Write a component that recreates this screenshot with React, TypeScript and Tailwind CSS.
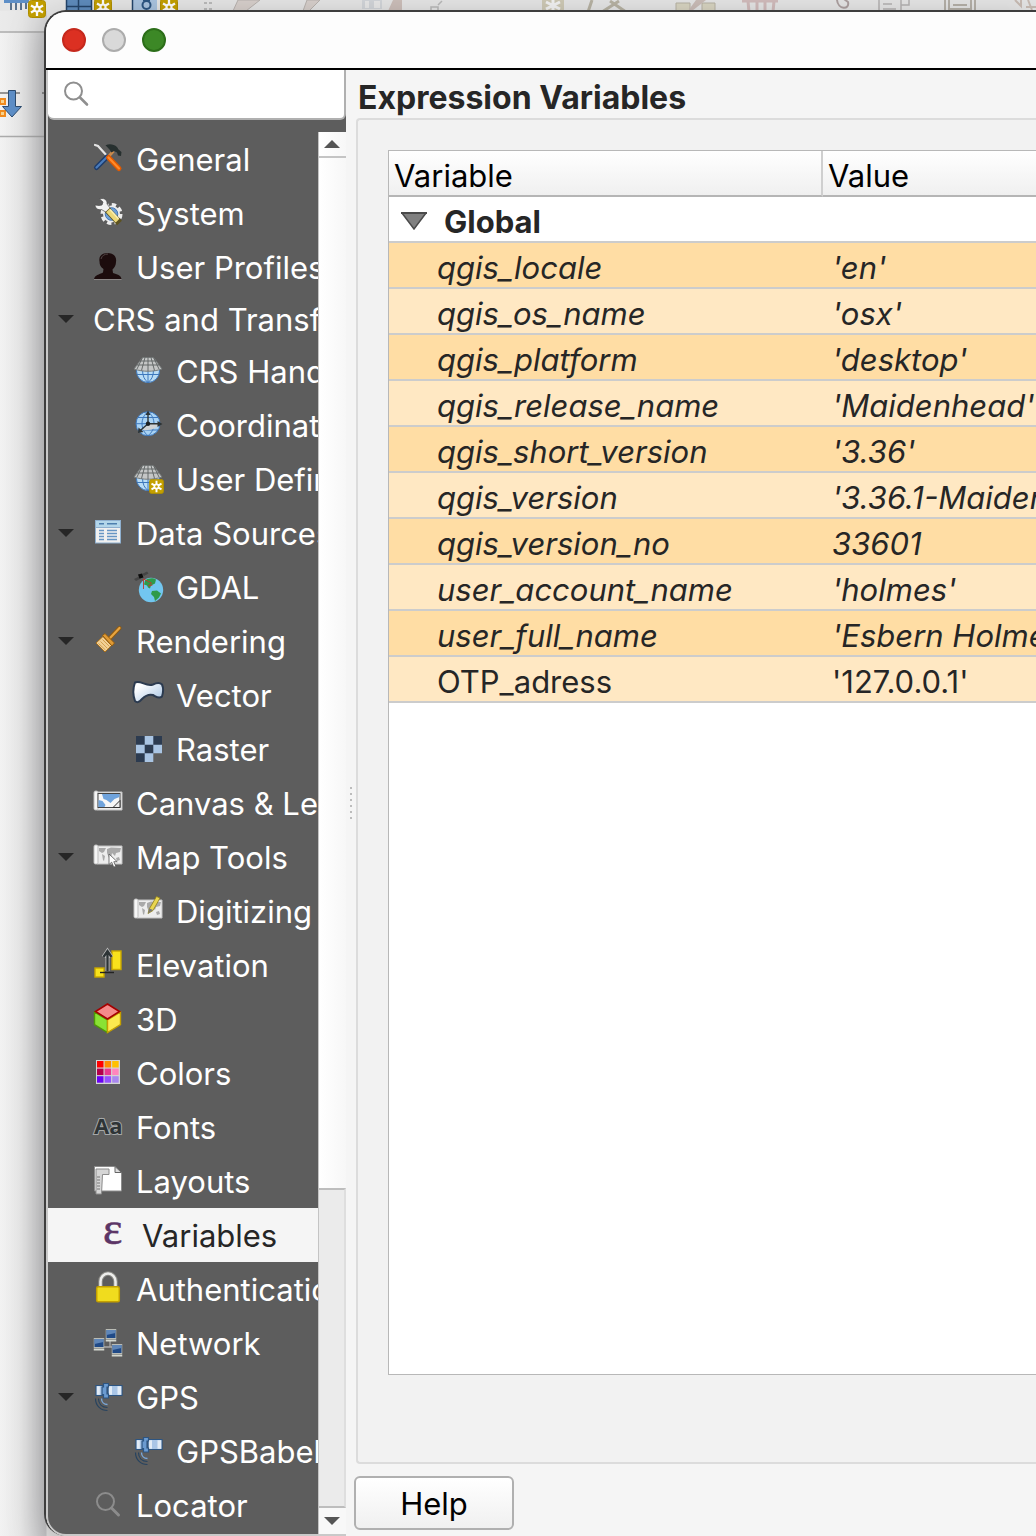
import React from "react";

type IconProps = { children: React.ReactNode };

function Icon({ children }: IconProps) {
  return (
    <svg viewBox="0 0 30 30" className="mb-[2px] size-[30px] shrink-0 overflow-visible" aria-hidden="true">
      {children}
    </svg>
  );
}

const GeneralIcon = () => (
  <Icon>
    <path d="M2 2l3 1 10 11" stroke="#e4e4e4" strokeWidth="2.2" fill="none" strokeLinecap="round" />
    <path d="M15.5 13.5l5-5.5" stroke="#c98a4b" strokeWidth="3" />
    <path d="M12.500 2.200c4-1.500 8.500-1 11.500 1.800l1.500 2.500 3 2.500-.5 4-3-.5-1-3-3-1.500-2.500 1.500-2-3z" fill="#27302f" />
    <path d="M14 14l-10.500 10.500" stroke="#1d3c6b" strokeWidth="5" strokeLinecap="round" />
    <path d="M14 14l-10.500 10.500" stroke="#4a7dbd" strokeWidth="2.200" strokeLinecap="round" />
    <path d="M15.500 14.500l10.500 11" stroke="#e05a00" strokeWidth="5" strokeLinecap="round" />
    <path d="M15.500 14.500l10.500 11" stroke="#ff8a2a" strokeWidth="2.200" strokeLinecap="round" />
  </Icon>
);

const SystemIcon = () => (
  <Icon>
    <circle cx="18.500" cy="17" r="9" fill="none" stroke="#ececec" strokeWidth="4" strokeDasharray="4.200 2.870" />
    <circle cx="18.500" cy="17" r="8.500" fill="#ececec" />
    <circle cx="18.500" cy="17" r="6.300" fill="#6d9fd8" stroke="#4878b0" />
    <path d="M2 8c0 3 3 5.500 6.500 4.500l5 3 4-4-3.500-4.500c.5-3-1.500-5.500-5-5.500l-2.500.5 3.500 3-1 3-3 .5z" fill="#f2f2f2" stroke="#4a4a4a" strokeWidth=".7" />
    <path d="M14.500 13l12 13" stroke="#5c5220" strokeWidth="6.500" />
    <path d="M15 13.500l9.500 10.200" stroke="#ecd878" strokeWidth="5" />
    <path d="M17 12.500l8.500 9.200" stroke="#fbf0b4" strokeWidth="1.500" />
  </Icon>
);

const UserIcon = () => (
  <Icon>
    <path d="M1 28c1-4 5-4.500 9-6.500l.5-3.500c-3-2-4-4-4-7.500C5.500 5 9 2 14.500 2S24 5 23 11c0 3.500-1.500 5.500-3.500 7.500l.5 3.500c4 1.500 8 2 8.500 6z" fill="#1c0c0d" />
    <path d="M8 8c1-3.500 3.500-5 7-5" stroke="#534646" fill="none" />
    <path d="M1 28.500h27.500" stroke="#8a8585" />
  </Icon>
);

const GlobeCone = () => (
  <>
    <circle cx="15" cy="16" r="11.500" fill="#b9dcf5" stroke="#3d78bd" />
    <path d="M4 19.500h22M15 15v12.500M9.500 15c0 6 2 10 5.500 12.500M20.500 15c0 6-2 10-5.500 12.500" stroke="#3d78bd" fill="none" />
    <path d="M9.500 2.500h11L29 14c-9 3-19 3-28 0z" fill="#c4c6c6" stroke="#777b7b" />
    <path d="M7 6h16M4 10h22M12 2.500L8.500 15.500M15 2.500V16M18 2.500l3.500 13M9.500 2.500L4 14M20.500 2.500L26 14" stroke="#5b6060" strokeWidth=".9" fill="none" />
  </>
);

const CrsIcon = () => (
  <Icon>
    <GlobeCone />
  </Icon>
);

const Badge = ({ x, y, size }: { x: number; y: number; size: number }) => (
  <svg x={x} y={y} width={size} height={size} viewBox="0 0 18 18">
    <rect x=".5" y=".5" width="17" height="17" rx="3" fill="#c4a000" stroke="#b08f00" />
    <path d="M9 2v14M3 5.500l12 7M3 12.500l12-7" stroke="#fff" strokeWidth="2.300" />
    <circle cx="9" cy="9" r="3.500" fill="#fff" />
    <circle cx="9" cy="9" r="1.500" fill="#c4a000" />
  </svg>
);

const UserCrsIcon = () => (
  <Icon>
    <GlobeCone />
    <Badge x={16} y={16} size={15} />
  </Icon>
);

const CoordIcon = () => (
  <Icon>
    <circle cx="15" cy="14.700" r="12" fill="#a9d3f4" stroke="#3d78bd" />
    <path d="M3 14.700h24M5 8.500h20M5 21h20M15 2.700c-8 6-8 18 0 24M15 2.700c8 6 8 18 0 24" stroke="#3d78bd" fill="none" />
    <path d="M15 15h11c-1 4-9 7-17 6z" fill="#cfd3d5" />
    <path d="M15 14.700V4M15 14.700h11M15 14.700l-8 7" stroke="#2e3436" strokeWidth="1.400" />
    <path d="M12.500 6L15 1.500 17.500 6zM24.500 12l5 3-5 3zM5.500 18.500L5 24l5.500-1z" fill="#2e3436" />
    <circle cx="15" cy="14.700" r="2.200" fill="#1d2123" />
  </Icon>
);

const DataIcon = () => (
  <Icon>
    <rect x="2.500" y="3.500" width="25" height="22.500" fill="#f0f0f0" stroke="#8fb0cf" />
    <rect x="3" y="4" width="24" height="6" fill="#b3d6ea" />
    <path d="M6 6.700h5M14 6.700h10" stroke="#4d7fae" strokeWidth="1.400" />
    <path d="M3 10.500h24" stroke="#8fb0cf" />
    <path d="M6 13.500h5M14 13.500h10M6 16.500h5M14 16.500h10M6 19.500h5M14 19.500h10M6 22.500h5M14 22.500h10" stroke="#6695c4" strokeWidth="1.300" />
  </Icon>
);

const GdalIcon = () => (
  <Icon>
    <circle cx="18" cy="19" r="12.200" fill="#72c6f0" />
    <path d="M12 9.500c3-2.500 8-3 11-1l-1 4-4 2-1 3-2-1-1-2-3-1z" fill="#2f9a4a" />
    <path d="M19 20l5-.500 4 3-2 4-4 3.500-1-4-3-3z" fill="#2f9a4a" />
    <path d="M10.500 18V8l8 4-3 3 4-1" stroke="#c0392b" strokeWidth=".9" fill="none" />
    <path d="M1 8l5-2.500 2 2L3 10zM9 3l5-2.500 1.500 2L11 5z" fill="#454545" />
    <path d="M5 3.500l4-1 1.500 4-4 1z" fill="#0c0c0c" />
  </Icon>
);

const BroomIcon = () => (
  <Icon>
    <path d="M17 13l9.500-10" stroke="#8f5a10" strokeWidth="4" strokeLinecap="round" />
    <path d="M17 13l9.500-10" stroke="#e8a540" strokeWidth="2.200" strokeLinecap="round" />
    <path d="M3 18l7-6.500 8.500 9L12 27z" fill="#f2d096" stroke="#a8701c" />
    <path d="M5.500 18.500l7 6.500M7.500 16.500l7 7M9.500 14.500l7 7" stroke="#cf9b48" strokeWidth=".9" />
    <path d="M9.500 10.500l2.500-2 9.500 9.500-2.500 3z" fill="#e09a34" stroke="#8f5a10" />
  </Icon>
);

const VectorIcon = () => (
  <Icon>
    <defs>
      <linearGradient id="vec" x1="0" y1="0" x2="1" y2="1">
        <stop offset=".2" stopColor="#fff" />
        <stop offset="1" stopColor="#a3c1e2" />
      </linearGradient>
    </defs>
    <path d="M2 3.500C8 1 13 8 20 5.500c3-1.500 7-2 9 0 1.300 3 1.300 8 0 12-3 3-6 0-9-1.500-5-1.500-8 1-11 4-3 3.500-5 4-7 2C-.2 16 0 9 2 3.500z" fill="url(#vec)" stroke="#2c3b50" strokeWidth="2" />
  </Icon>
);

const RasterIcon = () => (
  <Icon>
    <path d="M3 3h26v17.300h-8.700V29H3z" fill="#aac5e3" />
    <path d="M3 3h8.700v8.700H3zM20.300 3H29v8.700h-8.700zM11.700 11.700h8.600v8.600h-8.600zM3 20.300h8.700V29H3z" fill="#2c3b50" />
  </Icon>
);

const Scroll = () => (
  <>
    <path d="M4 5h25v18H4z" fill="#ededed" stroke="#c2c2c2" />
    <rect x="1" y="4" width="4" height="19" rx="1.500" fill="#f6f6f6" stroke="#bdbdbd" />
  </>
);

const CanvasIcon = () => (
  <Icon>
    <Scroll />
    <rect x="5" y="6.500" width="22" height="14" fill="#f6f6f6" stroke="#444" />
    <path d="M9 7h17.500v3l-5 2-4 4-4-3-3-1zM5.500 13l4 1 3 4-1 2H5.500z" fill="#6fa3dc" />
    <path d="M20 20.500l7-7v7z" fill="#ededed" stroke="#333" />
  </Icon>
);

const WorldMap = () => (
  <>
    <Scroll />
    <path d="M6 7h7l-2 4-2 1-3-2zM9 13l3 2-1 5-1-1zM14 8l4-1.500 10 .5-1 4-4 1-1 3-3-3-1 5-2 0-2-5zM23 17l3-1 1 3-3 1z" fill="#a9a9a9" />
  </>
);

const MapToolsIcon = () => (
  <Icon>
    <WorldMap />
    <path d="M16 13v10.500l2.700-2.300 2 5 2.100-1-2-4.500h3.400z" fill="#fff" stroke="#555" strokeWidth=".8" />
  </Icon>
);

const DigitizingIcon = () => (
  <Icon>
    <WorldMap />
    <path d="M15 18.500l1.500-5 7-12 3.500 1.500-7 12.500z" fill="#e9d650" stroke="#8f7d16" strokeWidth=".8" />
    <path d="M15 18.500l1.500-5 3.500 1.500z" fill="#777" />
  </Icon>
);

const ElevationIcon = () => (
  <Icon>
    <rect x="19" y="2" width="9" height="18.500" fill="#f8e21c" stroke="#c9a800" strokeWidth="1.400" />
    <rect x="2" y="19" width="9" height="9" fill="#f8e21c" stroke="#c9a800" strokeWidth="1.400" />
    <path d="M14.500 22V3M10.500 8l4-6 4 6" stroke="#bbb" strokeWidth="4" fill="none" />
    <path d="M14.500 22V3M10.500 8l4-6 4 6" stroke="#2d3436" strokeWidth="2.300" fill="none" />
    <path d="M7 23.500h14" stroke="#222" strokeWidth="1.400" />
  </Icon>
);

const CubeIcon = () => (
  <Icon>
    <path d="M1.500 9l13 8v12.500l-13-8z" fill="#8ae234" stroke="#4e9a06" strokeWidth="1.400" />
    <path d="M27.500 9l-13 8v12.500l13-8z" fill="#fce94f" stroke="#c4a000" strokeWidth="1.400" />
    <path d="M14.500 1l12 7.500-12 7.500-12-7.500z" fill="#f58a8a" stroke="#a40000" strokeWidth="1.600" />
  </Icon>
);

const swatches = ["#ff0000", "#ff8c00", "#ffc000", "#b3004c", "#e8388f", "#ff85bd", "#6a00f4", "#9650ff", "#a987f0"];

const ColorsIcon = () => (
  <Icon>
    <rect x="3" y="3" width="24" height="24" fill="#d5d5d5" />
    {swatches.map((c, i) => (
      <rect key={c} x={4 + (i % 3) * 7.600} y={4 + Math.floor(i / 3) * 7.600} width="6.500" height="6.500" fill={c} />
    ))}
  </Icon>
);

const FontsIcon = () => (
  <Icon>
    <text x="1" y="23" fontFamily="Open Sans, sans-serif" fontWeight="700" fontSize="22" fill="#2e3436" stroke="#a5a8a8" strokeWidth="2" paintOrder="stroke">Aa</text>
  </Icon>
);

const LayoutsIcon = () => (
  <Icon>
    <path d="M1.500 1.500H22l6.500 6V26h-27z" fill="#fff" stroke="#8c8c8c" />
    <path d="M22 1.500v6h6.500z" fill="#ddd" stroke="#666" />
    <path d="M3 4h13v5.500H9.500L8.500 29H3z" fill="#d6d6d6" stroke="#8c8c8c" />
    <path d="M4 12h3M4 15h3M4 18h3M4 21h3M4 24h3" stroke="#777" />
  </Icon>
);

const VariablesIcon = () => (
  <Icon>
    <text x="4" y="25" fontFamily="Liberation Serif, serif" fontSize="46" fill="#5c3566" stroke="#5c3566" strokeWidth=".6">ε</text>
  </Icon>
);

const LockIcon = () => (
  <Icon>
    <path d="M7.500 14V8.500a7.500 8 0 0115 0V14" stroke="#8b8b86" strokeWidth="4.500" fill="none" />
    <path d="M7.500 14V8.500a7.500 8 0 0115 0V14" stroke="#eeeeec" strokeWidth="2.500" fill="none" />
    <rect x="3.700" y="13.700" width="22.600" height="15" rx="1.500" fill="#f0dc1e" stroke="#c4a000" strokeWidth="1.500" />
  </Icon>
);

const Monitor = ({ x, y }: { x: number; y: number }) => (
  <svg x={x} y={y} width="11" height="13" viewBox="0 0 11 13">
    <rect x=".5" y=".5" width="10" height="9" fill="#204a87" stroke="#b9bcb6" />
    <path d="M1 1h9v3L1 6z" fill="#5f86b8" />
    <path d="M0 10.500h11v2H0z" fill="#d3d7cf" />
  </svg>
);

const NetworkIcon = () => (
  <Icon>
    <path d="M17 13v7M10 20h10" stroke="#aaa" strokeWidth="1.300" />
    <Monitor x={12.500} y={2} />
    <Monitor x={0.500} y={11} />
    <Monitor x={18.500} y={17} />
  </Icon>
);

const GpsIcon = () => (
  <Icon>
    <path d="M3 4.500h7v10H3zM15 4.500h14v10H15z" fill="#a9c5e6" stroke="#2d5582" strokeWidth="1.200" />
    <path d="M3.800 5.300h3v8.400h-3zM24.500 5.300h3.800v8.400h-3.800zM16 5.300h3v8.400h-3z" fill="#e2ebf5" />
    <path d="M10.500 2.500h5V6h-1.500v7h1.500v4h-5v-3.500H9V6h1.500z" fill="#6b9bd1" stroke="#2d5582" strokeWidth="1.200" />
    <path d="M8.500 17.500c0 3.500 2.500 6 6 6" stroke="#7aa7d9" strokeWidth="1.400" fill="none" />
    <path d="M5.500 17.500c0 5.500 3.500 9 9 9" stroke="#27435f" strokeWidth="1.200" fill="none" />
    <path d="M2.500 17.500c0 7 5 12 12 12" stroke="#27435f" strokeWidth="1.200" fill="none" />
  </Icon>
);

const LocatorIcon = () => (
  <Icon>
    <circle cx="12.500" cy="12.500" r="8.500" stroke="#8c8c8c" strokeWidth="2" fill="none" />
    <path d="M18.500 19l7 7" stroke="#8c8c8c" strokeWidth="3" strokeLinecap="round" />
  </Icon>
);

type Item = { label: string; icon?: React.ReactNode; child?: boolean; open?: boolean; selected?: boolean };

const items: Item[] = [
  { label: "General", icon: <GeneralIcon /> },
  { label: "System", icon: <SystemIcon /> },
  { label: "User Profiles", icon: <UserIcon /> },
  { label: "CRS and Transforms", open: true },
  { label: "CRS Handling", icon: <CrsIcon />, child: true },
  { label: "Coordinate Transforms", icon: <CoordIcon />, child: true },
  { label: "User Defined CRS", icon: <UserCrsIcon />, child: true },
  { label: "Data Sources", icon: <DataIcon />, open: true },
  { label: "GDAL", icon: <GdalIcon />, child: true },
  { label: "Rendering", icon: <BroomIcon />, open: true },
  { label: "Vector", icon: <VectorIcon />, child: true },
  { label: "Raster", icon: <RasterIcon />, child: true },
  { label: "Canvas & Legend", icon: <CanvasIcon /> },
  { label: "Map Tools", icon: <MapToolsIcon />, open: true },
  { label: "Digitizing", icon: <DigitizingIcon />, child: true },
  { label: "Elevation", icon: <ElevationIcon /> },
  { label: "3D", icon: <CubeIcon /> },
  { label: "Colors", icon: <ColorsIcon /> },
  { label: "Fonts", icon: <FontsIcon /> },
  { label: "Layouts", icon: <LayoutsIcon /> },
  { label: "Variables", icon: <VariablesIcon />, selected: true },
  { label: "Authentication", icon: <LockIcon /> },
  { label: "Network", icon: <NetworkIcon /> },
  { label: "GPS", icon: <GpsIcon />, open: true },
  { label: "GPSBabel", icon: <GpsIcon />, child: true },
  { label: "Locator", icon: <LocatorIcon /> },
];

function SidebarItem({ label, icon, child, open, selected }: Item) {
  const indent = child ? "w-[85px]" : selected ? "w-[51px]" : "w-[45px]";
  return (
    <li>
      <button
        type="button"
        aria-current={selected ? "page" : undefined}
        className={`flex w-full items-center overflow-hidden text-left whitespace-nowrap ${icon ? "h-[54px]" : "h-[50px]"} ${selected ? "bg-[#f5f5f5] text-[#262626]" : "text-white"}`}
      >
        <span className={`shrink-0 pl-[10px] ${indent}`}>
          {open && (
            <svg viewBox="0 0 16 8" className="h-2 w-4" aria-hidden="true">
              <path d="M0 0h16L8 8z" fill="#262626" />
            </svg>
          )}
        </span>
        {icon}
        <span className={icon ? "ml-[13px] pt-[2px]" : "pt-[2px]"}>{label}</span>
      </button>
    </li>
  );
}

const variables: [string, string][] = [
  ["qgis_locale", "'en'"],
  ["qgis_os_name", "'osx'"],
  ["qgis_platform", "'desktop'"],
  ["qgis_release_name", "'Maidenhead'"],
  ["qgis_short_version", "'3.36'"],
  ["qgis_version", "'3.36.1-Maidenhead'"],
  ["qgis_version_no", "33601"],
  ["user_account_name", "'holmes'"],
  ["user_full_name", "'Esbern Holmes'"],
  ["OTP_adress", "'127.0.0.1'"],
];

function Backdrop() {
  return (
    <div className="absolute inset-0 bg-[linear-gradient(to_right,#f2f2f2,#e8e8e8_20px,#c8c8ca_46px,#e6e6e6_47px)]" aria-hidden="true">
      <svg className="block h-[140px] w-full" preserveAspectRatio="xMinYMin slice">
        <rect width="2000" height="11" fill="#e6e6e6" />
        <rect width="46" height="20" y="11" fill="#e6e6e6" opacity=".6" />
        <path d="M0 32h46M0 136.500h46" stroke="#ababab" strokeWidth="1.500" />
        <path d="M0 93h20M42 93h4" stroke="#777" strokeWidth="1.500" />
        <path d="M4 0h25v3H4z" fill="#5e8fc7" />
        <path d="M11 3v7M16 3v7M21 3v7M26 3v6" stroke="#2d4c70" strokeWidth="1.500" />
        <path d="M66 0h26v12H66z" fill="#5f8cbd" />
        <path d="M66.500 0v12M78.500 0v12M91.500 0v12M66 6.500h26" stroke="#24456b" strokeWidth="1.500" fill="none" />
        <path d="M132 0h25v12h-25z" fill="#aac4e0" />
        <path d="M132.500 0v12" stroke="#24456b" strokeWidth="1.500" />
        <circle cx="146.500" cy="5" r="4" fill="none" stroke="#2d5582" strokeWidth="2" />
        <path d="M143 0h7" stroke="#2d5582" strokeWidth="2" />
        <Badge x={28} y={0} size={18} />
        <Badge x={94} y={-2} size={18} />
        <Badge x={160} y={-2} size={18} />
        <path d="M204 2h3v2h-3zM209 2h3v2h-3zM204 8h3v2h-3zM209 8h3v2h-3z" fill="#bbb" />
        <path d="M233 11l5-11h22l-14 11zM303 11l4-11h13l-11 11z" fill="#d8d0cc" stroke="#b9b3af" />
        <path d="M362 0h20v9h-20z" fill="#d3d6da" />
        <path d="M374 1h6v7h-6zM365 1h4v7h-4z" fill="#e9e9e9" />
        <path d="M388 11l5-11h9v11z" fill="#cdbfba" />
        <path d="M431 7h7v5h-7zM438 5l4-4" stroke="#b9b9b9" fill="none" strokeWidth="1.500" />
        <path d="M542 0h22v12h-22z" fill="#cfcab6" />
        <path d="M553 0v10M546 2l14 7M546 9l14-7" stroke="#f4f4f4" strokeWidth="3" />
        <path d="M588 12l4-12M602 12l17-11M610 1l16 11" stroke="#b8b3a4" strokeWidth="3" />
        <path d="M676 3h14v9h-14zM702 3h13v9h-13z" fill="#d9d5c2" stroke="#b8b3a4" />
        <path d="M688 11l8-11h10l-14 11z" fill="#cbbdb8" />
        <path d="M742 1h36M748 1l1 11M757 1v11M765 1v11M774 1l-1 11" stroke="#d2bcbc" strokeWidth="3" />
        <path d="M837 0c1 10 13 10 11 2l-4-3" stroke="#ada0a0" strokeWidth="2" fill="none" />
        <path d="M879 0v11h22V0M883 4h9M883 9h13M901 5h8V0" stroke="#b5b3b3" strokeWidth="1.500" fill="none" />
        <path d="M945 0v11M975 0v11M949 0v9h22V0M953 5h14" stroke="#b5b0a8" strokeWidth="2" fill="none" />
        <path d="M1015 0l6 6V0M1026 7h10M1028 0l4 10" stroke="#c9bcb4" strokeWidth="2" fill="none" />
        <path d="M0 99h5v5H0zM0 111h5v5H0z" fill="#f7d28c" stroke="#f08a1d" strokeWidth="2" />
        <path d="M8.500 90.500h7v16h6L12 117l-9.500-10.500h6z" fill="#5e8fc7" stroke="#2d4c70" />
      </svg>
    </div>
  );
}

export default function App() {
  return (
    <div className="relative flex min-h-screen flex-col overflow-hidden pt-[10px] pl-[44px] font-[Inter,sans-serif] text-[31px] leading-[40px]">
      <Backdrop />
      <main className="relative flex flex-1 flex-col overflow-hidden rounded-l-[22px] border-t-2 border-l-2 border-[#3e3e3e] bg-[#f5f5f5] shadow-[0_10px_36px_rgba(0,0,0,0.25)]">
        <header className="flex h-[58px] shrink-0 items-center gap-4 border-b-2 border-black bg-[#fdfdfd] pl-4">
          <button type="button" aria-label="Close" className="size-6 rounded-full border-2 border-[#c5281c] bg-[#dc3022]" />
          <button type="button" aria-label="Minimize" className="size-6 rounded-full border-2 border-[#acacac] bg-[#d9d9d9]" />
          <button type="button" aria-label="Zoom" className="size-6 rounded-full border-2 border-[#2c6e19] bg-[#3c8826]" />
        </header>

        <div className="flex flex-1">
          <aside className="flex w-[300px] shrink-0 flex-col overflow-hidden rounded-bl-[20px] border-b-2 border-l-2 border-[#c9c9c9] bg-[#5d5d5d]">
            <label className="flex h-[50px] shrink-0 items-center rounded-b-md border-r-2 border-b-2 border-[#b0b0b0] bg-white pl-4">
              <svg viewBox="0 0 26 26" className="size-[26px] shrink-0" fill="none" stroke="#8f8f8f" aria-hidden="true">
                <circle cx="9.500" cy="10" r="8.500" strokeWidth="2" />
                <path d="M16 16.500l7 7" strokeWidth="2.600" strokeLinecap="round" />
              </svg>
              <input type="search" aria-label="Search options" className="ml-2 w-full min-w-0 bg-transparent text-[#262626] outline-none" />
            </label>
            <div className="flex flex-1 pt-3">
              <nav aria-label="Options" className="min-w-0 flex-1 pb-[2px]">
                <ul>
                  {items.map((item) => (
                    <SidebarItem key={item.label} {...item} />
                  ))}
                </ul>
              </nav>
              <div className="flex w-7 shrink-0 flex-col border-l border-[#c4c4c4] bg-[linear-gradient(to_right,#ffffff,#f7f7f7)]">
                <button type="button" aria-label="Scroll up" className="flex h-[26px] items-center border-b-2 border-[#c4c4c4] pl-[5px]">
                  <svg viewBox="0 0 16 8" className="h-2 w-4">
                    <path d="M0 8h16L8 0z" fill="#555" />
                  </svg>
                </button>
                <div className="flex-[1033]" />
                <div className="flex-[317] border-y-2 border-r-2 border-[#bdbdbd] border-r-[#dedede] bg-[#ebebeb]" />
                <button type="button" aria-label="Scroll down" className="flex h-[26px] items-center bg-[#f8f8f8] pl-[5px]">
                  <svg viewBox="0 0 16 8" className="h-2 w-4">
                    <path d="M0 0h16L8 8z" fill="#555" />
                  </svg>
                </button>
              </div>
            </div>
          </aside>

          <div className="flex w-[8px] shrink-0 flex-col items-end justify-center pr-[2px]" role="separator" aria-orientation="vertical">
            <div className="flex flex-col gap-1">
              {[0, 1, 2, 3, 4, 5].map((i) => (
                <span key={i} className="size-[2px] bg-[#bcbcbc]" />
              ))}
            </div>
          </div>

          <section className="flex min-w-0 flex-1 flex-col pb-[6px]">
            <h1 className="h-12 pt-2 pl-1 text-[32px] font-bold text-[#262626]">Expression Variables</h1>
            <div className="ml-[2px] flex flex-1 flex-col rounded-l-sm border-y-2 border-l-2 border-[#dcdcdc] bg-[#f2f2f2] pt-[30px] pb-[87px] pl-[30px]">
              <div className="flex-1 border-y border-l border-[#b8b8b8] bg-white">
                <table className="w-full table-fixed border-separate border-spacing-0 text-left leading-[38px] whitespace-nowrap">
                  <thead>
                    <tr className="h-[46px] bg-[linear-gradient(to_bottom,#ffffff,#efefef)] text-black">
                      <th scope="col" className="w-[434px] border-r-2 border-b-2 border-[#b5b5b5] border-r-[#cfcfcf] p-0 pt-[6px] pl-[5px] font-normal">Variable</th>
                      <th scope="col" className="border-b-2 border-[#b5b5b5] p-0 pt-[6px] pl-[5px] font-normal">Value</th>
                    </tr>
                  </thead>
                  <tbody className="text-[#262626]">
                    <tr className="h-[46px]">
                      <th scope="rowgroup" colSpan={2} className="border-b-2 border-[#cccccc] p-0 pt-[6px] pl-3 font-bold">
                        <button type="button" aria-expanded="true" className="flex items-center">
                          <svg viewBox="0 0 26 18" className="mr-[17px] mb-[2px] h-[18px] w-[26px]" aria-hidden="true">
                            <path d="M1 1h24L13 17z" fill="#808080" stroke="#4a4a4a" strokeWidth="1.500" />
                            <path d="M0 1h26" stroke="#4a4a4a" strokeWidth="2" />
                          </svg>
                          Global
                        </button>
                      </th>
                    </tr>
                    {variables.map(([name, value], i) => (
                      <tr key={name} className={`h-[46px] ${i % 2 ? "bg-[#ffe8c3]" : "bg-[#ffdda4]"} ${i < 9 ? "italic" : ""}`}>
                        <td className="overflow-hidden border-b-2 border-[#cccccc] p-0 pt-[6px] pl-12">{name}</td>
                        <td className="overflow-hidden border-b-2 border-[#cccccc] p-0 pt-[6px] pl-[9px]">{value}</td>
                      </tr>
                    ))}
                  </tbody>
                </table>
              </div>
            </div>
            <button type="button" className="mt-3 h-[54px] w-40 rounded-md border-2 border-[#b0b0b0] bg-[linear-gradient(to_bottom,#ffffff,#f0f0f0)] pt-[2px] text-black">
              Help
            </button>
          </section>
        </div>
      </main>
    </div>
  );
}
